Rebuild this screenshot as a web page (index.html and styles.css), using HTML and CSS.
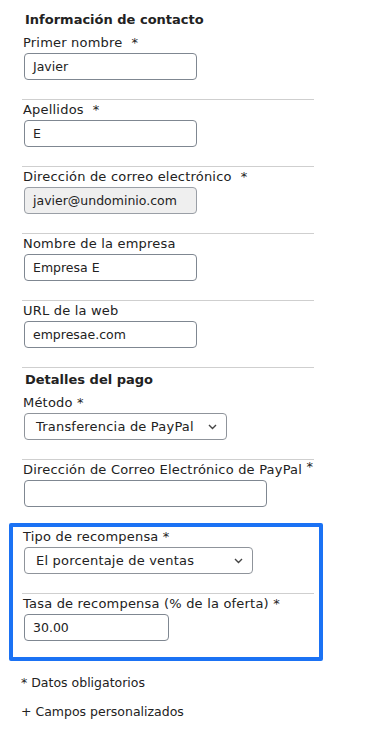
FILE: index.html
```html
<!DOCTYPE html>
<html lang="es">
<head>
<meta charset="utf-8">
<link rel="stylesheet" href="styles.css">
</head>
<body>
<div class="page">
  <div class="form">
    <h3 class="heading first">Información de contacto</h3>
    <div class="field nodiv">
      <label class="label">Primer nombre<span class="req">*</span></label>
      <div class="input w173">Javier</div>
    </div>
    <div class="field">
      <label class="label">Apellidos<span class="req">*</span></label>
      <div class="input w173">E</div>
    </div>
    <div class="field">
      <label class="label">Dirección de correo electrónico<span class="req">*</span></label>
      <div class="input w173 disabled">javier@undominio.com</div>
    </div>
    <div class="field">
      <label class="label">Nombre de la empresa</label>
      <div class="input w173">Empresa E</div>
    </div>
    <div class="field">
      <label class="label">URL de la web</label>
      <div class="input w173">empresae.com</div>
    </div>
    <div class="section">
      <h3 class="heading">Detalles del pago</h3>
      <div class="field nodiv">
        <label class="label">Método *</label>
        <div class="select w202"><span>Transferencia de PayPal</span><svg class="chev" width="9" height="6" viewBox="0 0 9 6"><path d="M1 1l3.5 3.5L8 1" fill="none" stroke="#444" stroke-width="1.4"/></svg></div>
      </div>
    </div>
    <div class="field last">
      <label class="label">Dirección de Correo Electrónico de PayPal <sup>*</sup></label>
      <div class="input w243"></div>
    </div>
  </div>
  <div class="highlight">
    <div class="field nodiv inbox">
      <label class="label">Tipo de recompensa *</label>
      <div class="select w228"><span>El porcentaje de ventas</span><svg class="chev" width="9" height="6" viewBox="0 0 9 6"><path d="M1 1l3.5 3.5L8 1" fill="none" stroke="#444" stroke-width="1.4"/></svg></div>
    </div>
    <div class="field inbox last">
      <label class="label">Tasa de recompensa (% de la oferta) *</label>
      <div class="input w144">30.00</div>
    </div>
  </div>
  <p class="note">* Datos obligatorios</p>
  <p class="note link">+ Campos personalizados</p>
</div>
</body>
</html>
```

FILE: styles.css
```css
* { box-sizing: border-box; }
html, body { margin: 0; padding: 0; background: #fff; }
body {
  font-family: "DejaVu Sans", Verdana, sans-serif;
  font-size: 12.5px;
  color: #222;
}
.page { padding-top: 12px; }
.form { padding-left: 22px; width: 314px; }
.heading {
  margin: 0;
  font-size: 13px;
  font-weight: bold;
  line-height: 16px;
  padding-left: 3px;
}
.section { border-top: 1px solid #cfcfcf; padding-top: 4px; }
.field {
  border-top: 1px solid #cfcfcf;
  padding: 2px 0 19px;
  display: flex;
  flex-direction: column;
  align-items: flex-start;
}
.field.nodiv { border-top: 0; padding-top: 7px; }
.field.last { padding-bottom: 16px; }
.label {
  display: block;
  font-size: 13px;
  letter-spacing: 0.2px;
  line-height: 16px;
  padding-left: 1px;
  margin-bottom: 2px;
  white-space: nowrap;
}
.req { margin-left: 9px; }
.label sup { font-size: 13px; vertical-align: 3px; line-height: 0; }
.input, .select {
  margin-left: 2px;
  height: 27px;
  border: 1px solid #7f8791;
  border-radius: 4px;
  background: #fff;
  line-height: 25px;
  padding-left: 8px;
  color: #222;
}
.input.disabled { background: #efefef; border-color: #9a9fa6; }
.select {
  display: flex;
  align-items: center;
  justify-content: space-between;
  padding-left: 11px;
  padding-right: 9px;
  border-color: #8f949b;
  font-size: 13px;
  letter-spacing: 0.2px;
}
.chev { display: block; }
.w173 { width: 173px; }
.w202 { width: 203px; }
.w243 { width: 243px; }
.w228 { width: 229px; }
.w144 { width: 145px; }
.highlight {
  margin-left: 9px;
  width: 314px;
  border: 4px solid #1b72f4;
  border-radius: 2px;
  padding-left: 9px;
  padding-right: 5px;
}
.field.inbox.nodiv { padding-top: 2px; }
.field.inbox.last { padding-bottom: 16px; }
.note {
  margin: 14px 0 0 21px;
  line-height: 16px;
}
.note.link { margin-top: 13px; }
```
